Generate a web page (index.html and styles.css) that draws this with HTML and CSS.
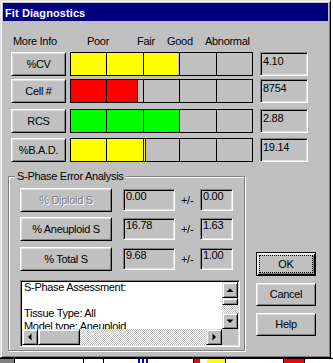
FILE: index.html
```html
<!DOCTYPE html>
<html>
<head>
<meta charset="utf-8">
<title>Fit Diagnostics</title>
<link rel="stylesheet" href="styles.css">
</head>
<body>
<div class="screen">
  <div class="window">
    <div class="titlebar">Fit Diagnostics</div>
    <div class="content">
      <div class="header">
        <span class="h-more">More Info</span>
        <span class="h-poor">Poor</span>
        <span class="h-fair">Fair</span>
        <span class="h-good">Good</span>
        <span class="h-abn">Abnormal</span>
      </div>

      <div class="metric m1">
        <button class="btn mbtn">%CV</button>
        <div class="bar fill-yellow noedge" style="--w:107px"><i></i><i></i><i></i><i></i><i></i></div>
        <div class="field vfield">4.10</div>
      </div>
      <div class="metric m2">
        <button class="btn mbtn">Cell #</button>
        <div class="bar fill-red" style="--w:66px"><i></i><i></i><i></i><i></i><i></i></div>
        <div class="field vfield">8754</div>
      </div>
      <div class="metric m3">
        <button class="btn mbtn">RCS</button>
        <div class="bar fill-green" style="--w:108px"><i></i><i></i><i></i><i></i><i></i></div>
        <div class="field vfield">2.88</div>
      </div>
      <div class="metric m4">
        <button class="btn mbtn">%B.A.D.</button>
        <div class="bar fill-yellow" style="--w:74px"><i></i><i></i><i></i><i></i><i></i></div>
        <div class="field vfield">19.14</div>
      </div>

      <div class="lower">
        <div class="group">
          <div class="legend">S-Phase Error Analysis</div>
          <div class="srow s1">
            <button class="btn sbtn disabled">% Diploid S</button>
            <div class="field gfield f1">0.00</div>
            <span class="pm">+/-</span>
            <div class="field gfield f2">0.00</div>
          </div>
          <div class="srow s2">
            <button class="btn sbtn">% Aneuploid S</button>
            <div class="field gfield f1">16.78</div>
            <span class="pm">+/-</span>
            <div class="field gfield f2">1.63</div>
          </div>
          <div class="srow s3">
            <button class="btn sbtn">% Total S</button>
            <div class="field gfield f1">9.68</div>
            <span class="pm">+/-</span>
            <div class="field gfield f2">1.00</div>
          </div>
          <div class="memo">
            <div class="memo-text">S-Phase Assessment:<br><br>Tissue Type: All<br>Model type: Aneuploid</div>
            <div class="vscroll">
              <div class="raised sb"><svg width="14" height="14" viewBox="0 0 14 14"><polygon points="3.5,9 10.5,9 7,5.5"/></svg></div>
              <div class="raised thumb-v"></div>
              <div class="track"></div>
              <div class="raised sb"><svg width="14" height="14" viewBox="0 0 14 14"><polygon points="3.5,5.5 10.5,5.5 7,9"/></svg></div>
            </div>
            <div class="hscroll">
              <div class="raised sb"><svg width="14" height="14" viewBox="0 0 14 14"><polygon points="8.5,3.5 8.5,10.5 5,7"/></svg></div>
              <div class="raised thumb-h"></div>
              <div class="track"></div>
              <div class="raised sb"><svg width="14" height="14" viewBox="0 0 14 14"><polygon points="5.5,3.5 5.5,10.5 9,7"/></svg></div>
            </div>
            <div class="corner"></div>
          </div>
        </div>
        <div class="actions">
          <button class="btn abtn default"><span class="focus">OK</span></button>
          <button class="btn abtn">Cancel</button>
          <button class="btn abtn">Help</button>
        </div>
      </div>
    </div>
  </div>
  <div class="desk">
    <span class="d-gray"></span>
    <span class="d-w1"></span>
    <span class="d-w2"></span>
    <span class="d-w3"></span>
    <span class="d-blue"></span>
    <span class="d-w4"></span>
    <span class="d-red"></span>
    <span class="d-w5"></span>
    <span class="d-yellow"></span>
    <span class="d-w6"></span>
    <span class="d-red2"></span>
    <span class="d-w7"></span>
  </div>
</div>
</body>
</html>
```

FILE: styles.css
```css
* { box-sizing: border-box; }
html, body { margin: 0; padding: 0; }
body {
  background: #fff;
  font: 11px/13px "Liberation Sans", Arial, sans-serif;
  letter-spacing: -0.3px;
  color: #000;
}
.screen { width: 333px; height: 363px; overflow: hidden; background: #fff; }

.window {
  width: 331px;
  height: 358px;
  background: #c0c0c0;
  border: 1px solid;
  border-color: #dfdfdf #000 #000 #dfdfdf;
  box-shadow: inset 1px 1px #fff, inset -1px -1px #808080;
  padding: 2px;
  overflow: hidden;
}
.titlebar {
  height: 18px;
  background: #000080;
  color: #fff;
  font-weight: bold;
  letter-spacing: 0.1px;
  line-height: 15px;
  padding: 3px 0 0 2px;
}
.content { padding-left: 5px; }

.header { display: flex; margin-top: 14px; height: 13px; white-space: nowrap; }
.h-more { margin-left: 5px; width: 74px; }
.h-poor { width: 50px; }
.h-fair { width: 30px; }
.h-good { width: 38px; }

.btn {
  font: inherit;
  letter-spacing: inherit;
  color: #000;
  background: #c0c0c0;
  border: 1px solid;
  border-color: #fff #000 #000 #fff;
  box-shadow: inset 1px 1px #dfdfdf, inset -1px -1px #808080;
  padding: 0;
  margin: 0;
  display: flex;
  align-items: center;
  justify-content: center;
  white-space: nowrap;
}
.raised {
  background: #c0c0c0;
  border: 1px solid;
  border-color: #dfdfdf #000 #000 #dfdfdf;
  box-shadow: inset 1px 1px #fff, inset -1px -1px #808080;
}

.metric { display: flex; height: 24px; margin-left: 3px; }
.m1 { margin-top: 4px; }
.m2 { margin-top: 3px; }
.m3 { margin-top: 6px; }
.m4 { margin-top: 5px; }
.mbtn { width: 55px; height: 24px; flex: none; }

.bar {
  --e: #000;
  margin-left: 4px;
  width: 183px;
  height: 24px;
  flex: none;
  border: 1px solid #000;
  display: flex;
  background: linear-gradient(90deg,
    var(--c) 0 var(--w),
    var(--e) var(--w) calc(var(--w) + 1px),
    #c0c0c0 calc(var(--w) + 1px));
}
.fill-yellow { --c: #ffff00; }
.fill-red { --c: #ff0000; }
.fill-green { --c: #00ff00; }
.noedge { --e: #c0c0c0; }
.bar i { flex: none; width: 36px; border-left: 1px solid #000; }
.bar i:first-child { width: 35px; border-left: 0; }
.bar i:nth-child(2), .bar i:nth-child(4) { width: 37px; }

.field {
  background: #c0c0c0;
  border: 1px solid;
  border-color: #808080 #fff #fff #808080;
  box-shadow: inset 1px 1px #000, inset -1px -1px #dfdfdf;
  white-space: nowrap;
}
.vfield { margin-left: 7px; width: 48px; height: 24px; padding: 2px 0 0 2px; flex: none; }

.lower { display: flex; margin-top: 14px; align-items: flex-start; }
.group {
  width: 237px;
  flex: none;
  border: 1px solid #808080;
  box-shadow: inset 1px 1px #fff, 1px 1px #fff;
  padding: 0 4px 3px 11px;
}
.legend {
  width: fit-content;
  margin: -7px 0 0 -5px;
  padding: 0 2px;
  background: #c0c0c0;
  line-height: 13px;
}
.srow { display: flex; align-items: center; height: 24px; }
.s1 { margin-top: 5px; }
.s2 { margin-top: 5px; }
.s3 { margin-top: 6px; }
.sbtn { width: 92px; height: 24px; flex: none; }
.disabled { color: #808080; text-shadow: 1px 1px 0 #fff; }
.gfield { height: 22px; padding: 0 0 0 2px; flex: none; }
.f1 { margin-left: 11px; width: 52px; }
.f2 { width: 33px; }
.pm { margin-left: 6px; width: 19px; flex: none; }

.memo {
  margin-top: 9px;
  width: 220px;
  height: 67px;
  display: grid;
  grid-template-columns: 1fr 16px;
  grid-template-rows: 1fr 16px;
  background: #fff;
  border: 1px solid;
  border-color: #808080 #fff #fff #808080;
  box-shadow: inset 1px 1px #000, inset -1px -1px #dfdfdf;
  padding: 1px;
}
.memo-text {
  padding-left: 2px;
  margin-top: -1px;
  overflow: hidden;
  white-space: nowrap;
  line-height: 13px;
}
.vscroll { display: flex; flex-direction: column; }
.hscroll { display: flex; }
.sb { width: 16px; height: 16px; flex: none; }
.sb svg { display: block; fill: #000; }
.thumb-v { height: 7px; flex: none; }
.thumb-h { width: 42px; flex: none; }
.track {
  flex: 1;
  background: repeating-conic-gradient(#c0c0c0 0 25%, #fff 0 50%) 0 0 / 2px 2px;
}
.corner { background: #c0c0c0; }

.actions {
  margin-left: 11px;
  padding-top: 76px;
  display: flex;
  flex-direction: column;
  gap: 7px;
}
.abtn { width: 60px; height: 23px; flex: none; }
.default {
  height: 24px;
  border-color: #000;
  box-shadow: inset 1px 1px #fff, inset -1px -1px #000, inset 2px 2px #dfdfdf, inset -2px -2px #808080;
  padding: 2px;
  align-items: stretch;
}
.focus {
  flex: 1;
  border: 1px dotted #000;
  display: flex;
  align-items: center;
  justify-content: center;
}

.desk { display: flex; height: 5px; border-top: 1px solid #000; }
.desk span { flex: none; height: 100%; }
.d-gray { width: 14px; background: #808080; }
.d-w1 { width: 69px; border-left: 1px solid #000; }
.d-w2 { width: 20px; border-left: 1px solid #000; }
.d-w3 { width: 35px; border-left: 1px solid #000; }
.d-blue { width: 12px; background: repeating-linear-gradient(90deg, #0000ff 0 2px, #fff 2px 4px); }
.d-w4 { width: 44px; border-right: 1px solid #000; }
.d-red { width: 6px; background: #ff0000; }
.d-w5 { width: 7px; }
.d-yellow { width: 19px; background: #ffff00; border-right: 1px solid #000; }
.d-w6 { width: 58px; border-right: 1px solid #000; }
.d-red2 { width: 21px; background: #ff0000; border-right: 1px solid #000; }
.d-w7 { width: 28px; }
```
